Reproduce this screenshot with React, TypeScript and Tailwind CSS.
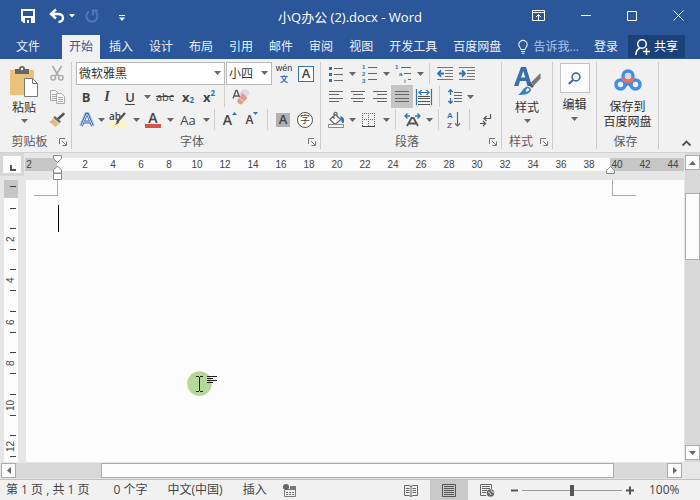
import React, { useState } from "react";

const tabs = [
  "插入",
  "设计",
  "布局",
  "引用",
  "邮件",
  "审阅",
  "视图",
  "开发工具",
  "百度网盘",
];

const rulerNumbers = Array.from({ length: 19 }, (_, i) => (i + 1) * 2);
const sideNumbers = [2, 4, 6, 8, 10, 12];

type IconProps = { w: number; h: number; children: React.ReactNode };

function Icon({ w, h, children }: IconProps) {
  return (
    <svg
      width={w}
      height={h}
      viewBox={`0 0 ${w} ${h}`}
      fill="none"
      className="block shrink-0 overflow-visible"
      aria-hidden="true"
    >
      {children}
    </svg>
  );
}

function Down() {
  return (
    <Icon w={7} h={4}>
      <path d="M0 0h7L3.500 4z" fill="#666" />
    </Icon>
  );
}

type ToolProps = { label: string; className: string; children: React.ReactNode };

function Tool({ label, className, children }: ToolProps) {
  return (
    <button
      aria-label={label}
      className={`flex h-[23px] shrink-0 items-center justify-center ${className}`}
    >
      {children}
    </button>
  );
}

function Sep() {
  return <div className="mx-1 h-[21px] w-px shrink-0 bg-[#cfcfcf]" />;
}

type GroupProps = {
  name: string;
  launcher?: boolean;
  className: string;
  children: React.ReactNode;
};

function Group({ name, launcher, className, children }: GroupProps) {
  return (
    <section
      className={`flex shrink-0 flex-col border-r border-[#cbcbcb] ${className}`}
    >
      <div className="h-[73px]">{children}</div>
      <div className="flex h-3.5 items-center pr-1">
        <span className="flex-1 text-center text-[#5c5c5c]">{name}</span>
        {launcher && (
          <button aria-label={`${name}设置`}>
            <Icon w={8} h={8}>
              <path d="M.5 6V.5H6M3 3l4 4M7.500 3.500v4h-4" stroke="#777" />
            </Icon>
          </button>
        )}
      </div>
    </section>
  );
}

function TitleBar() {
  return (
    <header className="grid h-[35px] grid-cols-[1fr_auto_1fr] items-center text-white">
      <div className="flex items-center pb-1 pl-[21px]">
        <button aria-label="保存">
          <Icon w={14} h={14}>
            <path d="M1 1h12v12H3l-2-2z" stroke="#fff" strokeWidth="2" />
            <path d="M2 7h10v6H2z" fill="#fff" />
            <path d="M4 9h6v5H4z" fill="#2b579a" />
            <path d="M6 11h2v3H6z" fill="#fff" />
          </Icon>
        </button>
        <button aria-label="撤消" className="ml-[14px]">
          <Icon w={16} h={14}>
            <path d="M2 5h7c3 0 5 1.500 5 4s-2 4-4.500 4M7 .5L2 5l5 4.500" stroke="#fff" strokeWidth="2.400" />
          </Icon>
        </button>
        <button aria-label="撤消列表" className="ml-1">
          <Icon w={6} h={4}>
            <path d="M0 0h6L3 3.500z" fill="#fff" />
          </Icon>
        </button>
        <button aria-label="恢复" className="ml-2.5">
          <Icon w={14} h={14}>
            <path d="M4 2.500A5.500 5.500 0 1 0 10.500 3M8 6.500V1.500h5" stroke="#5378b3" strokeWidth="2" />
          </Icon>
        </button>
        <button aria-label="自定义快速访问工具栏" className="mt-1 ml-5">
          <Icon w={6} h={6}>
            <path d="M0 .5h6" stroke="#fff" />
            <path d="M0 2.500h6L3 6z" fill="#fff" />
          </Icon>
        </button>
      </div>
      <h1 className="text-[13px]">小Q办公 (2).docx - Word</h1>
      <div className="flex items-center justify-end gap-9 pr-4 pb-1">
        <button aria-label="功能区显示选项">
          <Icon w={13} h={11}>
            <path d="M.5.5h12v10H.5zM.5 2.500h12M6.500 10V5M4 7l2.500-2.500L9 7" stroke="#fff" />
          </Icon>
        </button>
        <button aria-label="最小化">
          <Icon w={10} h={11}>
            <path d="M0 5.500h10" stroke="#fff" />
          </Icon>
        </button>
        <button aria-label="最大化">
          <Icon w={10} h={10}>
            <path d="M.5.5h9v9h-9z" stroke="#fff" />
          </Icon>
        </button>
        <button aria-label="关闭">
          <Icon w={11} h={11}>
            <path d="M.5.5l10 10M10.500.5l-10 10" stroke="#fff" />
          </Icon>
        </button>
      </div>
    </header>
  );
}

function TabBar() {
  return (
    <nav className="flex h-6 items-stretch text-[#eaf1fb]">
      <button className="ml-[9px] px-[7px]">文件</button>
      <button className="ml-[15px] bg-[#f1f1f1] px-[7px] text-[#2b579a]">开始</button>
      <div className="ml-0.5 flex gap-0.5">
        {tabs.map((tab) => (
          <button key={tab} className="px-[7px]">
            {tab}
          </button>
        ))}
      </div>
      <div className="ml-auto flex items-stretch pr-[15px]">
        <button className="flex items-center gap-1.5 text-[#afc5e5]">
          <Icon w={10} h={14}>
            <path d="M3 9.500C3 8 .8 7.200.8 4.600a4.200 4.200 0 0 1 8.400 0C9.200 7.200 7 8 7 9.500zM3 11.500h4M3.500 13.300h3" stroke="#e6eefa" strokeWidth="1.100" />
          </Icon>
          告诉我...
        </button>
        <button className="ml-[15px]">登录</button>
        <button className="mb-px ml-2.5 flex items-center gap-1 bg-[#1b4278] px-[7px] text-white">
          <Icon w={15} h={16}>
            <circle cx="7" cy="5" r="4.300" stroke="#fff" strokeWidth="1.500" />
            <path d="M.8 16c.2-3.500 1.700-6 4.200-7M11.500 9v7M8 12.500h7" stroke="#fff" strokeWidth="1.500" />
          </Icon>
          共享
        </button>
      </div>
    </nav>
  );
}

function Clipboard() {
  return (
    <Group name="剪贴板" launcher className="w-[72px]">
      <div className="flex">
        <button className="flex h-[70px] w-12 flex-col items-center pt-1">
          <Icon w={28} h={31}>
            <path d="M0 4h24v25H0z" fill="#e9c27c" />
            <path d="M5 3h4a3 3 0 0 1 6 0h4v5H5z" fill="#666" />
            <circle cx="12" cy="3" r="1.200" fill="#f1f1f1" />
            <path d="M14.500 12.500h8l5 5v13h-13z" fill="#fff" stroke="#777" />
            <path d="M22.500 12.500v5h5" stroke="#777" />
          </Icon>
          <span className="leading-[22px] text-[#333]">粘贴</span>
          <Down />
        </button>
        <div className="pl-px">
          <Tool label="剪切" className="w-4">
            <Icon w={14} h={15}>
              <path d="M2.500 0l6 10M11.500 0l-6 10" stroke="#aaa" strokeWidth="1.600" />
              <circle cx="3.200" cy="11.700" r="2.300" stroke="#aaa" strokeWidth="1.400" />
              <circle cx="10.800" cy="11.700" r="2.300" stroke="#aaa" strokeWidth="1.400" />
            </Icon>
          </Tool>
          <Tool label="复制" className="w-4">
            <Icon w={15} h={14}>
              <path d="M.5.500h5l3 3v7h-8z" fill="#f6f6f6" stroke="#aaa" />
              <path d="M2 4.500h4M2 6.500h4M2 8.500h4" stroke="#aaa" />
              <path d="M6.500 3.500h5l3 3v7h-8z" fill="#f6f6f6" stroke="#aaa" />
              <path d="M8 7.500h5M8 9.500h5M8 11.500h5" stroke="#aaa" />
            </Icon>
          </Tool>
          <Tool label="格式刷" className="w-4">
            <Icon w={16} h={14}>
              <path d="M14.500 1L9.500 5.500" stroke="#555" strokeWidth="2.600" strokeLinecap="round" />
              <path d="M6 3l6 5.500-1.500 1.700-6.300-5.500z" fill="#666" />
              <path d="M4 5.500l6 5.200L6.500 14 0 8.500c2-.5 3-1.500 4-3z" fill="#e6b977" />
            </Icon>
          </Tool>
        </div>
      </div>
    </Group>
  );
}

type PickerProps = { label: string; className: string; options: string[] };

function Picker({ label, className, options }: PickerProps) {
  return (
    <div
      className={`relative h-[23px] border border-[#b9b9b9] bg-white ${className}`}
    >
      <select
        aria-label={label}
        className="h-full w-full appearance-none pl-0.5 text-[#333] outline-none"
      >
        {options.map((option) => (
          <option key={option}>{option}</option>
        ))}
      </select>
      <span className="pointer-events-none absolute top-2 right-[3px]">
        <Down />
      </span>
    </div>
  );
}

function FontGroup() {
  return (
    <Group name="字体" launcher className="w-[249px] pl-1">
      <div className="flex gap-px">
        <Picker label="字体" className="w-[149px]" options={["微软雅黑", "宋体", "黑体"]} />
        <Picker label="字号" className="w-[46px]" options={["小四", "四号", "五号"]} />
        <Tool label="拼音指南" className="w-[22px] flex-col">
          <span className="font-['Liberation_Sans',sans-serif] text-[9px] leading-[10px] text-[#333]">
            wén
          </span>
          <span className="text-[8px] leading-[11px] font-bold text-[#2e75b6]">文</span>
        </Tool>
        <Tool label="字符边框" className="w-5">
          <span className="h-4 w-4 border border-[#2e75b6] bg-white text-[13px] leading-[13px] font-semibold text-[#444]">
            A
          </span>
        </Tool>
      </div>
      <div className="flex items-center text-[13px] text-[#444]">
        <Tool label="加粗" className="w-5 font-bold">
          B
        </Tool>
        <Tool label="倾斜" className="w-[22px]">
          <i className="font-['Liberation_Serif',serif] text-[14px] font-bold">I</i>
        </Tool>
        <Tool label="下划线" className="w-6 font-semibold">
          <u className="underline-offset-2">U</u>
        </Tool>
        <Tool label="下划线样式" className="w-2.5">
          <Down />
        </Tool>
        <Tool label="删除线" className="w-[26px]">
          <s className="text-[11px]">abc</s>
        </Tool>
        <Tool label="下标" className="w-5 font-bold">
          x<span className="self-end text-[8px] text-[#2e75b6]">2</span>
        </Tool>
        <Tool label="上标" className="w-[22px] font-bold">
          x<span className="self-start text-[8px] text-[#2e75b6]">2</span>
        </Tool>
        <Sep />
        <Tool label="清除所有格式" className="w-6">
          <Icon w={18} h={16}>
            <path d="M10 1c4-2 8 0 7 4l-4 5-6-5z" fill="#e0d6e6" />
            <path d="M1 9.500L4 1.500h1l3 8M2 7h5" stroke="#555" strokeWidth="1.300" />
            <path d="M10.500 4l5 5-5.500 6c-2 1.500-5.500-1.500-4.500-4z" fill="#e39a8e" />
            <path d="M7 8.500l5 4.500" stroke="#f3d5cf" />
          </Icon>
        </Tool>
      </div>
      <div className="flex items-center text-[#444]">
        <Tool label="文本效果" className="w-[21px]">
          <Icon w={16} h={16}>
            <path d="M2 14L7 2h2l5 12M4.500 10h7" stroke="#a9cbee" strokeWidth="4" strokeLinejoin="round" />
            <path d="M2.500 14L7.500 2h1l5 12M5 10h6" stroke="#2e62a8" strokeWidth="2.400" />
            <path d="M2.500 14L7.500 2.500h1l5 11.500M5 10h6" stroke="#fff" strokeWidth=".8" />
          </Icon>
        </Tool>
        <Tool label="文本效果列表" className="w-2">
          <Down />
        </Tool>
        <Tool label="突出显示" className="w-[27px]">
          <Icon w={20} h={18}>
            <path d="M0 11h18v6H0z" fill="#fbf4c4" />
            <text x="0" y="9" fontSize="10" fontWeight="600" fill="#444">ab</text>
            <path d="M16 2l-8 9" stroke="#555" strokeWidth="2.500" />
            <path d="M9 9l-3 5 4-2z" fill="#555" />
          </Icon>
        </Tool>
        <Tool label="突出显示颜色" className="w-2">
          <Down />
        </Tool>
        <Tool label="字体颜色" className="w-[26px] flex-col">
          <span className="text-[14px] leading-[12px] font-semibold">A</span>
          <span className="h-1 w-4 bg-[#d9534a]" />
        </Tool>
        <Tool label="字体颜色列表" className="w-2">
          <Down />
        </Tool>
        <Tool label="更改大小写" className="w-7 text-[13px]">
          Aa
        </Tool>
        <Tool label="大小写列表" className="w-2">
          <Down />
        </Tool>
        <Sep />
        <Tool label="增大字号" className="w-[22px] text-[14px] font-semibold">
          A
          <span className="self-start pt-1">
            <Icon w={5} h={3}>
              <path d="M0 3h5L2.500 0z" fill="#2e75b6" />
            </Icon>
          </span>
        </Tool>
        <Tool label="减小字号" className="w-[22px] text-[12px] font-semibold">
          A
          <span className="self-start pt-1">
            <Icon w={5} h={3}>
              <path d="M0 0h5L2.500 3z" fill="#2e75b6" />
            </Icon>
          </span>
        </Tool>
        <Sep />
        <Tool label="字符底纹" className="w-[22px]">
          <span className="h-[14px] w-[14px] bg-[#b0b0b0] text-[13px] leading-[13px] font-semibold">
            A
          </span>
        </Tool>
        <Tool label="带圈字符" className="w-[22px]">
          <span className="h-4 w-4 rounded-full border border-[#555] bg-white text-[10px] leading-[13px]">
            字
          </span>
        </Tool>
      </div>
    </Group>
  );
}

function ParagraphGroup() {
  return (
    <Group name="段落" launcher className="w-[181px] pl-1">
      <div className="flex items-center">
        <Tool label="项目符号" className="w-[22px]">
          <Icon w={14} h={16}>
            <path d="M5 2.500h9M5 8.500h9M5 14.500h9" stroke="#666" />
            <path d="M0 1h3v3H0zM0 7h3v3H0zM0 13h3v3H0z" fill="#2e75b6" />
          </Icon>
        </Tool>
        <Tool label="项目符号列表" className="w-2.5">
          <Down />
        </Tool>
        <Tool label="编号" className="w-6">
          <Icon w={15} h={17}>
            <path d="M6 2.500h9M6 8.500h9M6 14.500h9" stroke="#666" />
            <g
              fontSize="6"
              fontWeight="700"
              fill="#2e75b6"
              className="font-['Liberation_Sans',sans-serif]"
            >
              <text x="0" y="4">1</text>
              <text x="0" y="11">2</text>
              <text x="0" y="18">3</text>
            </g>
          </Icon>
        </Tool>
        <Tool label="编号列表" className="w-2.5">
          <Down />
        </Tool>
        <Tool label="多级列表" className="w-6">
          <Icon w={17} h={17}>
            <path d="M6 2.500h10M9 8.500h7M13 14.500h3" stroke="#666" />
            <g
              fontSize="6"
              fontWeight="700"
              fill="#2e75b6"
              className="font-['Liberation_Sans',sans-serif]"
            >
              <text x="0" y="4">1</text>
              <text x="4" y="11">a</text>
              <text x="9" y="18">i</text>
            </g>
          </Icon>
        </Tool>
        <Tool label="多级列表样式" className="w-2.5">
          <Down />
        </Tool>
        <Sep />
        <Tool label="减少缩进量" className="w-[22px]">
          <Icon w={16} h={13}>
            <path d="M0 .5h16M8 3.500h8M8 6.500h8M8 9.500h8M0 12.500h16" stroke="#777" />
            <path d="M1 6.500h6M4 3.500l-3 3 3 3" stroke="#2e75b6" strokeWidth="1.800" />
          </Icon>
        </Tool>
        <Tool label="增加缩进量" className="w-[22px]">
          <Icon w={16} h={13}>
            <path d="M0 .5h16M8 3.500h8M8 6.500h8M8 9.500h8M0 12.500h16" stroke="#777" />
            <path d="M0 6.500h6M3 3.500l3 3-3 3" stroke="#2e75b6" strokeWidth="1.800" />
          </Icon>
        </Tool>
      </div>
      <div className="flex items-center">
        <Tool label="左对齐" className="w-[22px]">
          <Icon w={14} h={11}>
            <path d="M0 .5h14M0 3.500h10M0 7.500h14M0 10.500h10" stroke="#666" />
          </Icon>
        </Tool>
        <Tool label="居中" className="w-[22px]">
          <Icon w={14} h={11}>
            <path d="M0 .5h14M2 3.500h10M0 7.500h14M2 10.500h10" stroke="#666" />
          </Icon>
        </Tool>
        <Tool label="右对齐" className="w-[22px]">
          <Icon w={14} h={11}>
            <path d="M0 .5h14M4 3.500h10M0 7.500h14M4 10.500h10" stroke="#666" />
          </Icon>
        </Tool>
        <Tool label="两端对齐" className="w-[22px] bg-[#c5c5c5]">
          <Icon w={14} h={11}>
            <path d="M0 .5h14M0 3.500h14M0 7.500h14M0 10.500h14" stroke="#666" />
          </Icon>
        </Tool>
        <Tool label="分散对齐" className="w-[22px]">
          <Icon w={16} h={16}>
            <path d="M.5 0v16M15.500 0v16M3 3.500h10M5.500 1L3 3.500 5.500 6M10.500 1L13 3.500 10.500 6" stroke="#2e75b6" strokeWidth="1.200" />
            <path d="M2 7.500h12M2 9.500h12M2 12.500h12M2 15.500h12" stroke="#555" />
          </Icon>
        </Tool>
        <Sep />
        <Tool label="行和段落间距" className="w-[22px]">
          <Icon w={14} h={15}>
            <path d="M6 3.500h8M6 6.500h8M6 9.500h8M6 12.500h8" stroke="#666" />
            <path d="M2.500 1v5M2.500 9v5M.3 3L2.500.8 4.700 3M.3 12l2.200 2.200L4.700 12" stroke="#2e75b6" strokeWidth="1.400" />
          </Icon>
        </Tool>
        <Tool label="间距选项" className="w-2">
          <Down />
        </Tool>
      </div>
      <div className="flex items-center">
        <Tool label="底纹" className="w-[22px]">
          <Icon w={17} h={16}>
            <path d="M7 2.500l6 5-6 5-5-5zM6 7V1.500c0-1.500 3-1.500 3 0V5" stroke="#666" strokeWidth="1.200" fill="#fff" />
            <path d="M12 4.500c3 0 4.500 1.500 4 6-.5.8-1.500.8-2 0z" fill="#2e75b6" />
            <path d="M.5 12.500h15v3H.5z" fill="#fff" stroke="#888" />
          </Icon>
        </Tool>
        <Tool label="底纹颜色" className="w-2.5">
          <Down />
        </Tool>
        <Tool label="边框" className="w-6">
          <Icon w={14} h={14}>
            <path d="M0 .5h13M0 6.500h13M.5 0v13M6.500 0v13M12.500 0v13" stroke="#666" strokeDasharray="1 1" />
            <path d="M0 13.500h13" stroke="#444" />
          </Icon>
        </Tool>
        <Tool label="边框样式" className="w-2.5">
          <Down />
        </Tool>
        <Sep />
        <Tool label="中文版式" className="w-6">
          <Icon w={17} h={14}>
            <path d="M3 13L7.500 5h2L14 13M5 10.500h7" stroke="#555" strokeWidth="1.800" />
            <path d="M1 3h5M11 3h5M3.500.5L1 3l2.500 2.500M13.500.500L16 3l-2.500 2.500" stroke="#2e75b6" strokeWidth="1.300" />
          </Icon>
        </Tool>
        <Tool label="中文版式选项" className="w-2.5">
          <Down />
        </Tool>
        <Sep />
        <Tool label="排序" className="w-[22px]">
          <Icon w={14} h={16}>
            <g
              fontSize="8"
              fontWeight="700"
              className="font-['Liberation_Sans',sans-serif]"
            >
              <text x="0" y="6" fill="#2e75b6">A</text>
              <text x="0" y="16" fill="#8a55a8">Z</text>
            </g>
            <path d="M10.500 0v14M8 11.500l2.500 2.500 2.500-2.500" stroke="#666" strokeWidth="1.200" />
          </Icon>
        </Tool>
        <Sep />
        <Tool label="显示编辑标记" className="w-[22px]">
          <Icon w={11} h={12}>
            <path d="M10.500 0v4.500H4M6.500 2L4 4.500 6.500 7M0 9.500h5M3 7l2.500 2.500L3 12" stroke="#555" strokeWidth="1.200" />
          </Icon>
        </Tool>
      </div>
    </Group>
  );
}

function Ribbon() {
  return (
    <div className="flex h-[94px] items-start border-b border-[#d2d2d2] bg-[#f1f1f1] pt-[3px] leading-4">
      <Clipboard />
      <FontGroup />
      <ParagraphGroup />
      <Group name="样式" launcher className="w-[51px]">
        <button className="flex w-full flex-col items-center pt-1 text-[#333]">
          <Icon w={28} h={31}>
            <path d="M1 20L8 1h5l6 19h-4.500L13 15H7l-1.500 5zM8 11.500h4.200L10.300 5z" fill="#3a6fae" />
            <path d="M27.500 7v5.500l-6.500 7-3-3z" fill="#777" />
            <path d="M16.500 17.500l3.500 3.500" stroke="#555" strokeWidth="3" />
            <path d="M13 21c3-1 5 1 5 3-1 4-6 5-13 5 3-1 4-6 8-8z" fill="#3a7fc4" />
            <path d="M14 22.500c1.500-.5 2.500.5 2.500 1.500-1 1-3 2-4 1.500z" fill="#fff" />
          </Icon>
          <span className="leading-[22px]">样式</span>
          <Down />
        </button>
      </Group>
      <Group name="" className="w-11">
        <button className="flex w-full flex-col items-center pt-px text-[#333]">
          <span className="flex h-[30px] w-[30px] items-center justify-center border border-[#c3c3c3] bg-[#fcfcfc]">
            <Icon w={13} h={13}>
              <circle cx="8" cy="5" r="3.900" stroke="#3a6aa8" strokeWidth="1.600" />
              <path d="M5 8L.8 12" stroke="#3a6aa8" strokeWidth="2" />
            </Icon>
          </span>
          <span className="leading-6">编辑</span>
          <Down />
        </button>
      </Group>
      <Group name="保存" className="w-[62px]">
        <button className="flex w-full flex-col items-center pt-[7px] leading-[15px] text-[#333]">
          <Icon w={28} h={22}>
            <path d="M10 11l8 6M18 11l-8 6" stroke="#3f8ee8" strokeWidth="3.500" />
            <circle cx="14" cy="7" r="5" fill="#f1f1f1" stroke="#3f8ee8" strokeWidth="3.500" />
            <circle cx="6.500" cy="15.500" r="4.500" stroke="#3f8ee8" strokeWidth="3.500" />
            <circle cx="21.500" cy="15.500" r="4.500" stroke="#3f8ee8" strokeWidth="3.500" />
            <path d="M9 8.500a5.200 5.200 0 0 0 10 0" stroke="#e8705f" strokeWidth="3.500" />
            <circle cx="14" cy="7" r="3" fill="#dcd9e4" />
          </Icon>
          <span className="pt-2">
            保存到
            <br />
            百度网盘
          </span>
        </button>
      </Group>
      <button aria-label="折叠功能区" className="mr-[9px] mb-1.5 ml-auto self-end">
        <Icon w={9} h={6}>
          <path d="M.5 5.500l4-4 4 4" stroke="#555" strokeWidth="1.800" />
        </Icon>
      </button>
    </div>
  );
}

function HorizontalRuler() {
  return (
    <div className="relative mt-[5px] mb-[9px] flex h-[13px] text-center font-['Liberation_Sans',Arial,sans-serif] text-[10px] leading-[13px] text-[#444]">
      <div className="w-8 shrink-0 bg-[#c6c6c6]">
        <div className="w-2">2</div>
      </div>
      <div className="flex w-[553px] shrink-0 gap-[14px] bg-[#fcfcfc] pl-[21px]">
        {rulerNumbers.map((n) => (
          <div key={n} className="w-[14px] shrink-0">
            {n}
          </div>
        ))}
      </div>
      <div className="flex flex-1 gap-[14px] overflow-hidden bg-[#c6c6c6]">
        {[40, 42, 44].map((n) => (
          <div key={n} className="w-[14px] shrink-0">
            {n}
          </div>
        ))}
      </div>
      {/* indent markers */}
      <div className="absolute -top-[3px] left-7">
        <Icon w={9} h={25}>
          <path d="M.5.5h8v3l-4 4-4-4zM.5 18v-3l4-4 4 4v3zM.5 18.500h8v6h-8z" fill="#fff" stroke="#888" />
        </Icon>
      </div>
      <div className="absolute top-2 left-[581px]">
        <Icon w={9} h={8}>
          <path d="M.5 7.500v-3l4-4 4 4v3z" fill="#fff" stroke="#888" />
        </Icon>
      </div>
    </div>
  );
}

function VerticalRuler() {
  return (
    <div className="mr-2 ml-1 w-[14px] shrink-0 overflow-hidden bg-[#fcfcfc] font-['Liberation_Sans',Arial,sans-serif] text-[10px] text-[#444]">
      <div className="flex h-[18px] justify-end bg-[#c6c6c6] pt-1.5 pr-0.5">
        <div className="h-px w-1.5 bg-[#444]" />
      </div>
      <div className="flex h-5 items-center justify-end pr-0.5">
        <div className="h-px w-1.5 bg-[#444]" />
      </div>
      <div className="grid h-[249px] grid-rows-6">
        {sideNumbers.map((n) => (
          <div key={n} className="flex flex-col items-end justify-center pr-0.5">
            <div className="h-px w-1.5 bg-[#444]" />
            <div className="flex h-5 rotate-180 items-center justify-center leading-[11px] [writing-mode:vertical-rl]">
              {n}
            </div>
            <div className="h-px w-1.5 bg-[#444]" />
          </div>
        ))}
      </div>
    </div>
  );
}

function Page() {
  return (
    <main className="relative min-w-0 flex-1 overflow-hidden bg-[#fcfcfc]">
      <div className="flex pl-2">
        <div className="h-4 w-6 shrink-0 border-r border-b border-[#aaa]" />
        <div className="w-[554px] shrink-0" />
        <div className="h-4 w-6 shrink-0 border-b border-l border-[#aaa]" />
      </div>
      <div className="mt-[9px] ml-8 h-[27px] w-px bg-black" />
      {/* mouse pointer with its click highlight */}
      <div className="absolute top-[191px] left-[161px]">
        <Icon w={31} h={25}>
          <circle cx="12.500" cy="12.500" r="12.300" fill="#b5d899" />
          <path d="M9 5.500h3M13 5.500h3M12.500 6v14M9 20.500h3M13 20.500h3" stroke="#222" />
          <path d="M20 5.500h10M20 7.500h6M20 9.500h10M20 11.500h6" stroke="#222" />
        </Icon>
      </div>
    </main>
  );
}

const scrollButton =
  "flex h-[15px] w-[15px] shrink-0 items-center justify-center border border-[#ababab] bg-[#fcfcfc]";

function Workspace() {
  return (
    <div className="flex min-h-0 flex-1 flex-col bg-[#e6e6e6]">
      <div className="flex min-h-0 flex-1">
        <div className="flex min-w-0 flex-1 flex-col">
          <div className="flex">
            <button
              aria-label="制表符"
              className="mr-px h-[23px] w-6 shrink-0 border-[3px] border-[#d6d6d6] bg-[#fcfcfc] pt-1.5 pl-[7px]"
            >
              <Icon w={6} h={6}>
                <path d="M1 0v5h5" stroke="#555" strokeWidth="2" />
              </Icon>
            </button>
            <div className="min-w-0 flex-1">
              <HorizontalRuler />
            </div>
          </div>
          <div className="flex min-h-0 flex-1">
            <VerticalRuler />
            <Page />
          </div>
        </div>
        <div className="ml-px flex w-[15px] flex-col bg-[#d8d8d8] pt-0.5">
          <button aria-label="向上滚动" className={scrollButton}>
            <Icon w={7} h={4}>
              <path d="M0 4h7L3.500 0z" fill="#666" />
            </Icon>
          </button>
          <div className="mt-[23px] h-[67px] border border-[#ababab] bg-[#fcfcfc]" />
          <button aria-label="向下滚动" className={`${scrollButton} mt-auto mb-0.5`}>
            <Down />
          </button>
        </div>
      </div>
      <div className="flex h-[17px] items-start pt-px pr-[18px] pl-px">
        <button aria-label="向左滚动" className={scrollButton}>
          <Icon w={4} h={7}>
            <path d="M4 0v7L0 3.500z" fill="#666" />
          </Icon>
        </button>
        <div className="flex h-[15px] flex-1 bg-[#d8d8d8] pr-[53px] pl-[85px]">
          <div className="flex-1 border border-[#ababab] bg-[#fcfcfc]" />
        </div>
        <button aria-label="向右滚动" className={scrollButton}>
          <Icon w={4} h={7}>
            <path d="M0 0v7l4-3.500z" fill="#666" />
          </Icon>
        </button>
      </div>
    </div>
  );
}

function StatusBar() {
  const [zoom, setZoom] = useState(100);

  return (
    <footer className="flex h-[21px] items-center border-t border-[#c0c0c0] bg-[#f1f1f1] pl-1.5 text-[#444]">
      <span>第 1 页 , 共 1 页</span>
      <span className="ml-6">0 个字</span>
      <span className="ml-5">中文(中国)</span>
      <span className="ml-5">插入</span>
      <button aria-label="宏录制" className="ml-4">
        <Icon w={14} h={13}>
          <path d="M1.500 6v6.500h11v-10H7M2 5.500h10" stroke="#777" />
          <path d="M7 2h6v3H7z" fill="#777" />
          <path d="M3 8.500h9M3 10.500h9" stroke="#777" strokeDasharray="2 1" />
          <circle cx="3" cy="3" r="3" fill="#666" />
        </Icon>
      </button>
      <div className="ml-auto flex h-full items-center">
        <button aria-label="阅读视图" className="px-3">
          <Icon w={14} h={13}>
            <path d="M.5 1.500H5l2 1 2-1h4.500v10H9l-2 1-2-1H.5zM7 2v10" stroke="#666" />
            <path d="M2 4.500h3.500M2 6.500h3.500M2 8.500h3.500M8.500 4.500H12M8.500 6.500H12M8.500 8.500H12" stroke="#666" />
          </Icon>
        </button>
        <button aria-label="页面视图" className="flex h-full items-center bg-[#c8c8c8] px-3">
          <Icon w={14} h={13}>
            <path d="M.5.5h13v12H.5zM2 2.500h10M2 4.500h10M2 6.500h10M2 8.500h10M2 10.500h10" stroke="#555" />
          </Icon>
        </button>
        <button aria-label="Web 版式视图" className="px-3">
          <Icon w={15} h={13}>
            <path d="M6 11.500H.5V.5h11V5M2 2.500h8M2 4.500h8M2 6.500h5M2 8.500h4" stroke="#666" />
            <circle cx="10.500" cy="9" r="3.800" fill="#666" />
            <path d="M8 8l2 1 1 2M11 6l1 2 2 .5" stroke="#ddd" />
          </Icon>
        </button>
        <button aria-label="缩小" className="ml-1">
          <Icon w={7} h={9}>
            <path d="M0 4.500h7" stroke="#555" strokeWidth="2" />
          </Icon>
        </button>
        <input
          type="range"
          aria-label="显示比例"
          min={10}
          max={190}
          value={zoom}
          onChange={(e) => setZoom(Number(e.target.value))}
          className="mx-1 h-3 w-[100px] appearance-none bg-transparent [&::-webkit-slider-runnable-track]:h-px [&::-webkit-slider-runnable-track]:bg-[#999] [&::-webkit-slider-thumb]:-mt-[5px] [&::-webkit-slider-thumb]:h-[11px] [&::-webkit-slider-thumb]:w-1 [&::-webkit-slider-thumb]:appearance-none [&::-webkit-slider-thumb]:bg-[#555]"
        />
        <button aria-label="放大">
          <Icon w={8} h={9}>
            <path d="M0 4.500h8M4 .5v8" stroke="#555" strokeWidth="2" />
          </Icon>
        </button>
        <span className="w-[66px] pl-[15px]">{zoom}%</span>
      </div>
    </footer>
  );
}

function App() {
  return (
    <div className="flex h-screen flex-col overflow-hidden bg-[#2b579a] font-['Open_Sans','Noto_Sans_CJK_SC',sans-serif] text-[12px] whitespace-nowrap">
      <TitleBar />
      <TabBar />
      <Ribbon />
      <Workspace />
      <StatusBar />
    </div>
  );
}

export default App;
